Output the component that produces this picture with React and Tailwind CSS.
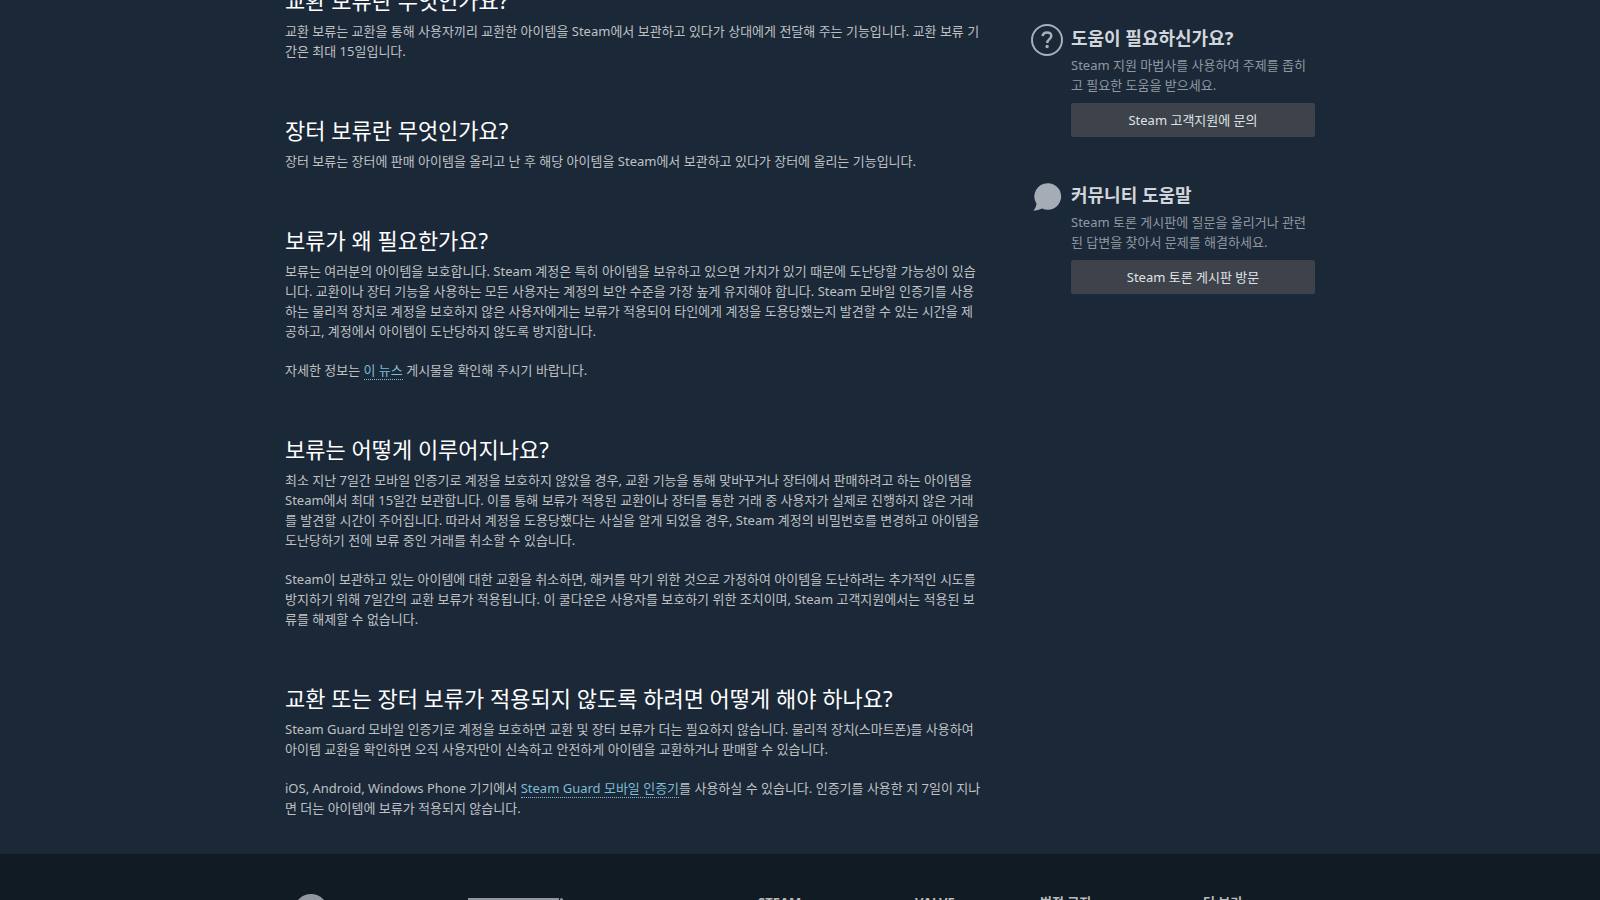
import React from "react";

const sections = [
  {
    title: "교환 보류란 무엇인가요?",
    paragraphs: [
      [
        "교환 보류는 교환을 통해 사용자끼리 교환한 아이템을 Steam에서 보관하고 있다가 상대에게 전달해 주는 기능입니다. 교환 보류 기",
        "간은 최대 15일입니다.",
      ],
    ],
  },
  {
    title: "장터 보류란 무엇인가요?",
    paragraphs: [
      ["장터 보류는 장터에 판매 아이템을 올리고 난 후 해당 아이템을 Steam에서 보관하고 있다가 장터에 올리는 기능입니다."],
    ],
  },
  {
    title: "보류가 왜 필요한가요?",
    paragraphs: [
      [
        "보류는 여러분의 아이템을 보호합니다. Steam 계정은 특히 아이템을 보유하고 있으면 가치가 있기 때문에 도난당할 가능성이 있습",
        "니다. 교환이나 장터 기능을 사용하는 모든 사용자는 계정의 보안 수준을 가장 높게 유지해야 합니다. Steam 모바일 인증기를 사용",
        "하는 물리적 장치로 계정을 보호하지 않은 사용자에게는 보류가 적용되어 타인에게 계정을 도용당했는지 발견할 수 있는 시간을 제",
        "공하고, 계정에서 아이템이 도난당하지 않도록 방지합니다.",
      ],
      [
        <>
          자세한 정보는 <TextLink>이 뉴스</TextLink> 게시물을 확인해 주시기 바랍니다.
        </>,
      ],
    ],
  },
  {
    title: "보류는 어떻게 이루어지나요?",
    paragraphs: [
      [
        "최소 지난 7일간 모바일 인증기로 계정을 보호하지 않았을 경우, 교환 기능을 통해 맞바꾸거나 장터에서 판매하려고 하는 아이템을",
        "Steam에서 최대 15일간 보관합니다. 이를 통해 보류가 적용된 교환이나 장터를 통한 거래 중 사용자가 실제로 진행하지 않은 거래",
        "를 발견할 시간이 주어집니다. 따라서 계정을 도용당했다는 사실을 알게 되었을 경우, Steam 계정의 비밀번호를 변경하고 아이템을",
        "도난당하기 전에 보류 중인 거래를 취소할 수 있습니다.",
      ],
      [
        "Steam이 보관하고 있는 아이템에 대한 교환을 취소하면, 해커를 막기 위한 것으로 가정하여 아이템을 도난하려는 추가적인 시도를",
        "방지하기 위해 7일간의 교환 보류가 적용됩니다. 이 쿨다운은 사용자를 보호하기 위한 조치이며, Steam 고객지원에서는 적용된 보",
        "류를 해제할 수 없습니다.",
      ],
    ],
  },
  {
    title: "교환 또는 장터 보류가 적용되지 않도록 하려면 어떻게 해야 하나요?",
    paragraphs: [
      [
        "Steam Guard 모바일 인증기로 계정을 보호하면 교환 및 장터 보류가 더는 필요하지 않습니다. 물리적 장치(스마트폰)를 사용하여",
        "아이템 교환을 확인하면 오직 사용자만이 신속하고 안전하게 아이템을 교환하거나 판매할 수 있습니다.",
      ],
      [
        <>
          iOS, Android, Windows Phone 기기에서 <TextLink>Steam Guard 모바일 인증기</TextLink>를 사용하실 수 있습니다. 인증기를 사용한 지 7일이 지나
        </>,
        "면 더는 아이템에 보류가 적용되지 않습니다.",
      ],
    ],
  },
];

const footerColumns = [
  { title: "STEAM", width: "w-[157px]" },
  { title: "VALVE", width: "w-[125px]" },
  { title: "법적 고지", width: "w-[163px]" },
  { title: "더 보기", width: "w-[112px]" },
];

function TextLink({ children }) {
  return (
    <a href="#" className="text-[#7cbcd6] border-b border-dotted border-[#7cbcd6] hover:text-white">
      {children}
    </a>
  );
}

function Section({ title, paragraphs }) {
  return (
    <section className="mb-[53px] last:mb-9">
      <h2 className="text-[22px] leading-8 font-normal text-white mb-[5px]">{title}</h2>
      <div className="flex flex-col gap-[19px]">
        {paragraphs.map((lines, i) => (
          <p key={i} className="whitespace-nowrap">
            {lines.map((line, j) => (
              <React.Fragment key={j}>
                {j > 0 && <br />}
                {line}
              </React.Fragment>
            ))}
          </p>
        ))}
      </div>
    </section>
  );
}

function HelpBox({ icon, title, lines, button }) {
  return (
    <div className="flex">
      <div className="w-10 shrink-0">{icon}</div>
      <div className="flex-1">
        <h3 className="text-lg leading-7 font-bold text-[#d2d6dc] mb-[3px]">{title}</h3>
        <p className="text-[#8f98a0] mb-2 whitespace-nowrap">
          {lines[0]}
          <br />
          {lines[1]}
        </p>
        <button className="block w-full h-[34px] rounded-xs bg-[#3d424b] text-[#dfe3e6] hover:bg-[#4a505b]">
          {button}
        </button>
      </div>
    </div>
  );
}

function QuestionIcon() {
  return (
    <svg width="32" height="32" viewBox="0 0 32 32" fill="none" stroke="#a8afb8" strokeWidth="2">
      <circle cx="16" cy="16" r="15" />
      <path
        d="M11.6 12.2c.3-2.4 2-3.600 4.400-3.600 2.600 0 4.300 1.300 4.300 3.500 0 3-4.100 3.200-4.100 6.900"
        strokeWidth="2.500"
      />
      <circle cx="16.100" cy="22.500" r="1.700" fill="#a8afb8" stroke="none" />
    </svg>
  );
}

function BubbleIcon() {
  return (
    <svg width="32" height="32" viewBox="0 0 32 32" fill="#a5acb5">
      <path d="M16.700 2.200a13.300 13.300 0 1 1-5.600 25.300C8.500 28.700 5.500 29.500 2.200 29.600c1.900-1.700 2.800-3.600 3.300-6.900A13.300 13.300 0 0 1 16.700 2.200Z" />
    </svg>
  );
}

export default function App() {
  return (
    <div className="h-screen overflow-hidden bg-[#1b2838] text-[13px] leading-5 text-[#bfc1c4] font-['Noto_Sans','Noto_Sans_CJK_KR',sans-serif]">
      <main className="max-w-[1030px] mx-auto flex justify-between">
        <div className="w-[704px] -mt-4">
          {sections.map((s) => (
            <Section key={s.title} {...s} />
          ))}
        </div>
        <aside className="w-[284px] pt-6 flex flex-col gap-11">
          <HelpBox
            icon={<QuestionIcon />}
            title="도움이 필요하신가요?"
            lines={["Steam 지원 마법사를 사용하여 주제를 좁히", "고 필요한 도움을 받으세요."]}
            button="Steam 고객지원에 문의"
          />
          <HelpBox
            icon={<BubbleIcon />}
            title="커뮤니티 도움말"
            lines={["Steam 토론 게시판에 질문을 올리거나 관련", "된 답변을 찾아서 문제를 해결하세요."]}
            button="Steam 토론 게시판 방문"
          />
        </aside>
      </main>
      <footer className="bg-[#111b24] pt-[38px] h-40">
        <div className="max-w-[1030px] mx-auto flex">
          <svg className="mt-0.5 ml-[9px] mr-[140px]" width="34" height="34" viewBox="0 0 34 34">
            <circle cx="17" cy="17" r="17" fill="#9197a0" />
          </svg>
          <svg className="mt-1.5 mr-auto" width="96" height="26" viewBox="0 0 96 26" fill="#9197a0">
            <rect width="91" height="26" />
            <circle cx="93.500" cy="1.500" r="1.500" />
          </svg>
          {footerColumns.map((c) => (
            <h4 key={c.title} className={`${c.width} font-bold text-[#b8bcbf]`}>
              {c.title}
            </h4>
          ))}
        </div>
      </footer>
    </div>
  );
}
